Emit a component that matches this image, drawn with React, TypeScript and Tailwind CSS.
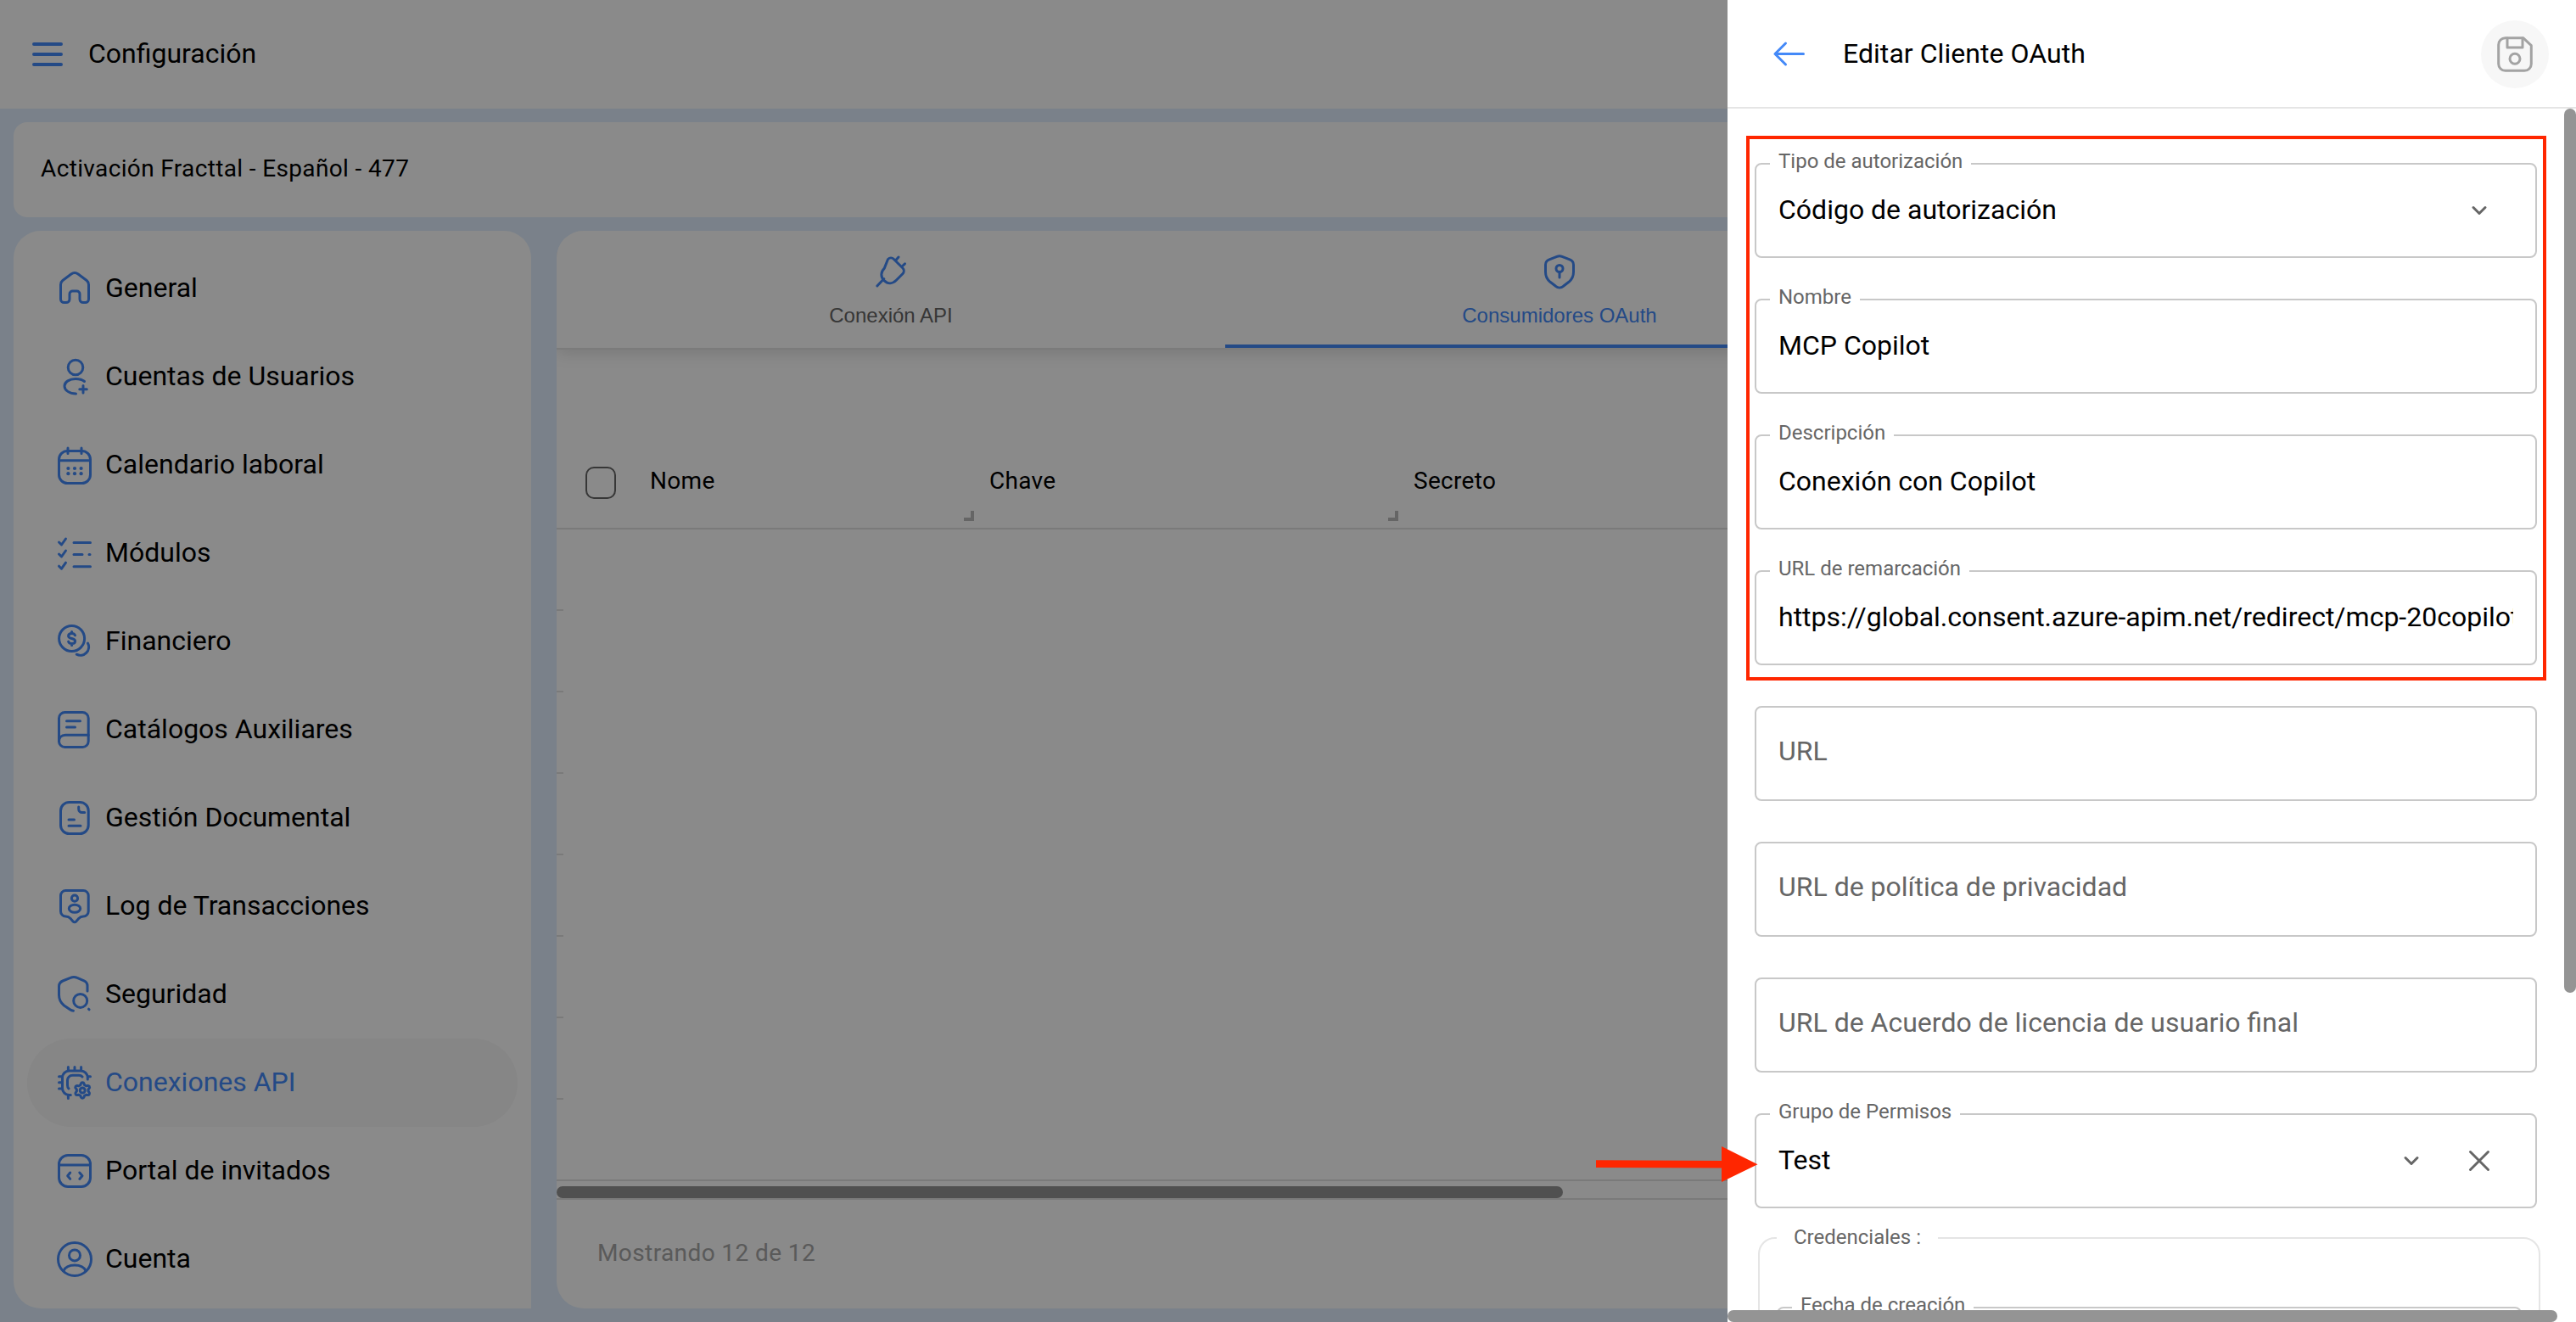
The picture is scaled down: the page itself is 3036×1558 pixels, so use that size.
import type { ReactNode } from 'react';

function Icon({ children, className = '' }: { children: ReactNode; className?: string }) {
  return (
    <svg
      width="48"
      height="48"
      viewBox="0 0 48 48"
      fill="none"
      stroke="currentColor"
      strokeWidth="3"
      strokeLinecap="round"
      strokeLinejoin="round"
      className={`shrink-0 ${className}`}
    >
      {children}
    </svg>
  );
}

const menuItems = [
  {
    label: 'General',
    icon: (
      <path d="M7.5 19.5c0-2 .9-3.8 2.4-5l10-7.5c2.4-1.8 5.8-1.8 8.2 0l10 7.5c1.5 1.2 2.4 3 2.4 5v17a4 4 0 0 1-4 4h-2.5a4 4 0 0 1-4-4v-6a3.5 3.5 0 0 0-3.5-3.5h-5a3.5 3.5 0 0 0-3.5 3.5v6a4 4 0 0 1-4 4h-2.5a4 4 0 0 1-4-4z" />
    ),
  },
  {
    label: 'Cuentas de Usuarios',
    icon: (
      <>
        <circle cx="25" cy="13" r="8.8" />
        <path d="M35.5 29.5C33 27.3 29 26.5 25 26.5c-7 0-13 3.5-13 8.5s6 9 13.5 9M34 34.5v8.5M29.8 38.7h8.5" />
      </>
    ),
  },
  {
    label: 'Calendario laboral',
    icon: (
      <>
        <rect x="5.5" y="7.5" width="37" height="38" rx="10" />
        <path d="M16 4v6.5M32 4v6.5M5.5 18.7h37" />
        <g fill="currentColor" stroke="none">
          <circle cx="16.4" cy="28" r="2.1" />
          <circle cx="24" cy="28" r="2.1" />
          <circle cx="31.6" cy="28" r="2.1" />
          <circle cx="16.4" cy="34.2" r="2.1" />
          <circle cx="24" cy="34.2" r="2.1" />
          <circle cx="31.6" cy="34.2" r="2.1" />
        </g>
      </>
    ),
  },
  {
    label: 'Módulos',
    icon: (
      <path d="M5.5 11l3 3 5-7M5.5 25l3 3 5-7M5.5 39.2l3 3 5-7M23 11.5h19.5M23 25.5h10M41 25.5h1M23 39.7h19.5" />
    ),
  },
  {
    label: 'Financiero',
    icon: (
      <>
        <circle cx="20.6" cy="20.5" r="15" />
        <path d="M24.5 16.8c-.6-1.6-2-2.4-3.9-2.4-2.2 0-4 1.1-4 3 0 4.3 8 1.9 8 6.2 0 1.9-1.8 3-4 3-2 0-3.5-.9-4-2.5M20.6 12.4v2M20.6 26.6v2" />
        <path d="M39.5 26A9.8 9.8 0 0 1 26.3 39.2" />
      </>
    ),
  },
  {
    label: 'Catálogos Auxiliares',
    icon: (
      <>
        <rect x="5.5" y="3.5" width="34.7" height="41" rx="7" />
        <path d="M14.5 13.7h16M14.5 21h10M40.2 30.3H13c-4.500 0-7.500 3-7.500 7.500" />
      </>
    ),
  },
  {
    label: 'Gestión Documental',
    icon: (
      <>
        <rect x="7.5" y="5.5" width="32.7" height="37" rx="10" />
        <path d="M28.700 11v2.500a4 4 0 0 0 4 4h3M17 26h6.500M17 33.200h14" />
      </>
    ),
  },
  {
    label: 'Log de Transacciones',
    icon: (
      <>
        <path d="M13.500 5.500h20.700a6 6 0 0 1 6 6v18.500a6 6 0 0 1-6 6c-2.300 0-4 .9-5.500 2.600l-3 3.300a2.400 2.400 0 0 1-3.600 0l-3-3.300c-1.500-1.700-3.200-2.600-5.600-2.600a6 6 0 0 1-6-6v-18.500a6 6 0 0 1 6-6z" />
        <circle cx="24" cy="14.7" r="3.6" />
        <ellipse cx="24" cy="26.8" rx="6.7" ry="4.5" />
      </>
    ),
  },
  {
    label: 'Seguridad',
    icon: (
      <>
        <path d="M39 20v-6c0-3.500-1.200-5-4-6.200l-8-3.400a9 9 0 0 0-8 0l-9 3.600c-3 1.300-4.500 3-4.500 6.500v10c0 5.500 1.700 9 6 12.500l7 4.800c1.500 1 2.500 1.300 4 1.400" />
        <circle cx="30.7" cy="31.4" r="8" />
        <path d="M40.500 41.200l.6.6" />
      </>
    ),
  },
  {
    label: 'Conexiones API',
    active: true,
    icon: (
      <>
        <path d="M39.300 20v-2a8 8 0 0 0-8-8H17.500a8 8 0 0 0-8 8v12.500a8 8 0 0 0 8 8h1.800" />
        <path d="M33 17c-1-1.200-2-1.700-4-1.700h-7.500a6 6 0 0 0-6 6V27c0 1.800.4 2.800 1.500 4" />
        <path d="M16.400 9.500V5.500M24 9.500V5.500M31.600 9.500V5.500M9 16.700H5.500M9 23.800H5.500M9 31H5.500M39.500 16.700h3M16.400 39v3.500" />
        <path d="M31.300 25.200a2 2 0 0 1 3.800 0l.5 1.500 1.900 1.100 1.500-.3a2 2 0 0 1 2 3.300l-1 1.200v2l1 1.200a2 2 0 0 1-2 3.300l-1.500-.3-1.900 1.100-.5 1.500a2 2 0 0 1-3.800 0l-.5-1.500-1.900-1.100-1.500.3a2 2 0 0 1-2-3.300l1-1.200v-2l-1-1.200a2 2 0 0 1 2-3.300l1.500.3 1.900-1.100z" />
        <circle cx="33.2" cy="33" r="3" />
      </>
    ),
  },
  {
    label: 'Portal de invitados',
    icon: (
      <>
        <rect x="5.5" y="5.5" width="37" height="37" rx="10.5" />
        <path d="M5.500 17h37M18.700 26l-3 3.700 3 3.700M29.800 26l3.200 3.700-3.200 3.700" />
      </>
    ),
  },
  {
    label: 'Cuenta',
    icon: (
      <>
        <circle cx="24" cy="24" r="19.5" />
        <circle cx="24" cy="19.4" r="6.5" />
        <path d="M10.800 37.800c2-4.300 7-6.800 13.200-6.800s11.200 2.500 13.200 6.800" />
      </>
    ),
  },
];

const columns = [
  { label: 'Nome', width: 'w-[400px]' },
  { label: 'Chave', width: 'w-[500px]' },
  { label: 'Secreto', width: 'w-[500px]' },
];

function Chevron() {
  return (
    <svg width="20" height="12" viewBox="0 0 20 12" fill="none" stroke="#666" strokeWidth="3" strokeLinecap="round" strokeLinejoin="round">
      <path d="M3 2.500l7 7 7-7" />
    </svg>
  );
}

function Field({ label, value, children }: { label: string; value?: string; children?: ReactNode }) {
  return (
    <div className="relative flex h-28 w-full shrink-0 rounded-lg border-2 border-[#c8c8c8] pl-[26px] pr-[26px]">
      {value ? (
        <>
          <span className="absolute -top-[18px] left-4 bg-white px-[10px] text-[24px] leading-[28px] text-[#666]">
            {label}
          </span>
          <span className="mt-[33px] h-10 min-w-0 flex-1 overflow-hidden whitespace-nowrap text-[32px] leading-10 text-black">
            {value}
          </span>
        </>
      ) : (
        <span className="mt-[31px] h-10 text-[32px] leading-10 text-[#666]">{label}</span>
      )}
      {children}
    </div>
  );
}

function Sidebar() {
  return (
    <nav className="h-[1270px] w-[610px] shrink-0 overflow-hidden rounded-[32px] rounded-br-none bg-white p-4">
      {menuItems.map((item) => (
        <div
          key={item.label}
          className={
            item.active
              ? 'flex h-[104px] items-center gap-3 rounded-full bg-[#f7f7f7] pl-8 text-[#4489f8]'
              : 'flex h-[104px] items-center gap-3 pl-8 text-black'
          }
        >
          <Icon className="text-[#4489f8]">{item.icon}</Icon>
          <span className="-mt-0.5 text-[32px] leading-10">{item.label}</span>
        </div>
      ))}
    </nav>
  );
}

function Content() {
  return (
    <main className="isolate flex h-[1270px] flex-1 flex-col overflow-hidden rounded-[32px] bg-white">
      {/* Tabs */}
      <div className="relative z-10 grid h-[138px] shrink-0 grid-cols-3 bg-white font-['Liberation_Sans',Arial,sans-serif] text-[24px] leading-8 shadow-[0_2px_0_0_#e4e4e4,0_4px_20px_0_rgba(0,0,0,0.16)]">
        <div className="flex flex-col items-center gap-3 pt-6 text-[#666]">
          <Icon className="text-[#4489f8]">
            <path d="M20.500 9.500a5 5 0 0 1 7 0l10.300 10.300a5 5 0 0 1 0 7l-7.500 7.500c-4.500 4.500-10 4.500-14.300.3s-4.200-10 .3-14.500zM29.500 11l3.500-4M36.500 18.500l4-3.700M15.800 32.500l-8 8.500" />
          </Icon>
          <span>Conexión API</span>
        </div>
        <div className="flex flex-col items-center gap-3 border-b-4 border-[#4489f8] pt-6 text-[#4489f8]">
          <Icon>
            <path d="M21 6.300a8 8 0 0 1 6 0l9 3.600c3 1.200 4.500 3 4.500 6v8.600c0 5-1.500 8.500-5.500 11.800l-6.500 5a7 7 0 0 1-9 0l-6.500-5c-4-3.300-5.500-6.800-5.500-11.800v-8.600c0-3 1.500-4.800 4.500-6z" />
            <circle cx="24" cy="20.5" r="4" />
            <path d="M24 24.500v6.500" />
          </Icon>
          <span>Consumidores OAuth</span>
        </div>
        <div />
      </div>

      {/* Table */}
      <div className="flex h-[214px] shrink-0 items-end border-b-2 border-[#e2e2e2]">
        <div className="flex h-[100px] w-[94px] shrink-0 pl-[34px] pt-7">
          <div className="h-[38px] w-9 rounded-[10px] border-2 border-[#666]" />
        </div>
        {columns.map((column) => (
          <div key={column.label} className={`relative h-[100px] shrink-0 pl-4 pt-[27px] ${column.width}`}>
            <span className="text-[28px] leading-9 tracking-[0.3px] text-black">{column.label}</span>
            <div className="absolute bottom-2 right-0.5 size-3 border-b-4 border-r-4 border-[#bbb]" />
          </div>
        ))}
      </div>
      <div className="h-[768px] shrink-0 border-b-2 border-[#e2e2e2]">
        {Array.from({ length: 7 }, (_, i) => (
          <div key={i} className="h-24 w-2 border-b-2 border-[#e2e2e2]" />
        ))}
      </div>
      <div className="h-[22px] shrink-0 border-b-2 border-[#e2e2e2] pt-1.5">
        <div className="h-3.5 w-[1186px] rounded-full bg-[#949494]" />
      </div>
      <div className="pl-12 pt-[45px] text-[28px] leading-9 tracking-[0.4px] text-[#a6a6a6]">Mostrando 12 de 12</div>
    </main>
  );
}

function Drawer() {
  return (
    <aside className="absolute right-0 top-0 flex h-[1558px] w-[1000px] flex-col bg-white">
      <div className="flex h-32 shrink-0 items-center border-b-2 border-[#e5e5e5] pl-12 pr-8">
        <Icon className="text-[#4489f8]">
          <path d="M41.500 24.500H8M20.500 12L8 24.500 20.500 37" />
        </Icon>
        <h2 className="ml-10 flex-1 text-[32px] leading-10 tracking-[0.05px] text-black">Editar Cliente OAuth</h2>
        <div className="mt-0.5 flex size-20 items-center justify-center rounded-full bg-[#f7f7f7]">
          <Icon className="text-[#a3a3a3]">
            <path d="M12.700 4.700h21l9.600 9v21.600a8 8 0 0 1-8 8H12.700a8 8 0 0 1-8-8V12.700a8 8 0 0 1 8-8z" />
            <path d="M15 5v11h18V5" />
            <circle cx="24" cy="29.3" r="6" />
          </Icon>
        </div>
      </div>

      <div className="relative flex min-h-0 flex-1">
        <div className="flex w-[986px] flex-col gap-12 overflow-hidden pl-8 pr-8 pt-16">
          <Field label="Tipo de autorización" value="Código de autorización">
            <div className="flex w-20 items-center justify-center">
              <Chevron />
            </div>
          </Field>
          <Field label="Nombre" value="MCP Copilot" />
          <Field label="Descripción" value="Conexión con Copilot" />
          <Field label="URL de remarcación" value="https://global.consent.azure-apim.net/redirect/mcp-20copilot" />
          <Field label="URL" />
          <Field label="URL de política de privacidad" />
          <Field label="URL de Acuerdo de licencia de usuario final" />
          <Field label="Grupo de Permisos" value="Test">
            <div className="flex w-20 items-center justify-center">
              <Chevron />
            </div>
            <div className="flex w-20 items-center justify-center">
              <svg width="28" height="28" viewBox="0 0 28 28" fill="none" stroke="#666" strokeWidth="3" strokeLinecap="round">
                <path d="M3.500 3.500l21 21M24.500 3.500l-21 21" />
              </svg>
            </div>
          </Field>
          <div className="relative -mr-1 ml-1 -mt-[14px] h-60 shrink-0 rounded-[20px] border-2 border-[#e5e5e5] px-5 pt-20">
            <span className="absolute -top-4 left-5 bg-white px-5 text-[24px] leading-[28px] text-[#666]">
              Credenciales :
            </span>
            <Field label="Fecha de creación" value=" " />
          </div>
        </div>
        <div className="h-[1042px] w-3.5 rounded-full bg-[#949494]" />
        {/* Highlighted fields */}
        <div className="absolute left-[22px] top-8 h-[642px] w-[943px] border-4 border-[#ff2600]" />
      </div>
      <div className="h-3.5 w-[978px] shrink-0 rounded-full bg-[#949494]" />
    </aside>
  );
}

export default function App() {
  return (
    <div className="relative h-[1558px] w-[3036px] overflow-hidden bg-[#e1efff] font-[Roboto,sans-serif]">
      <header className="flex h-32 items-center bg-white pl-8">
        <Icon className="text-[#4489f8]">
          <path strokeWidth="4" d="M8 12h32M8 24h32M8 36h32" />
        </Icon>
        <h1 className="-mt-0.5 ml-6 text-[32px] leading-10 text-black">Configuración</h1>
      </header>
      <div className="flex flex-col gap-4 p-4">
        <div className="flex h-28 items-center rounded-2xl bg-white px-8 pb-0.5 text-[28px] leading-9 tracking-[0.36px] text-black">
          Activación Fracttal - Español - 477
        </div>
        <div className="flex gap-[30px]">
          <Sidebar />
          <Content />
        </div>
      </div>

      <div className="absolute inset-0 bg-black/46" />
      <Drawer />

      {/* Callout arrow */}
      <svg className="absolute left-[1880px] top-[1350px]" width="194" height="46" viewBox="0 0 194 46" fill="#ff2600">
        <path d="M1 17.300l148 .7V1l42.500 21.300L149 43V26.500L1 26z" />
      </svg>
    </div>
  );
}
